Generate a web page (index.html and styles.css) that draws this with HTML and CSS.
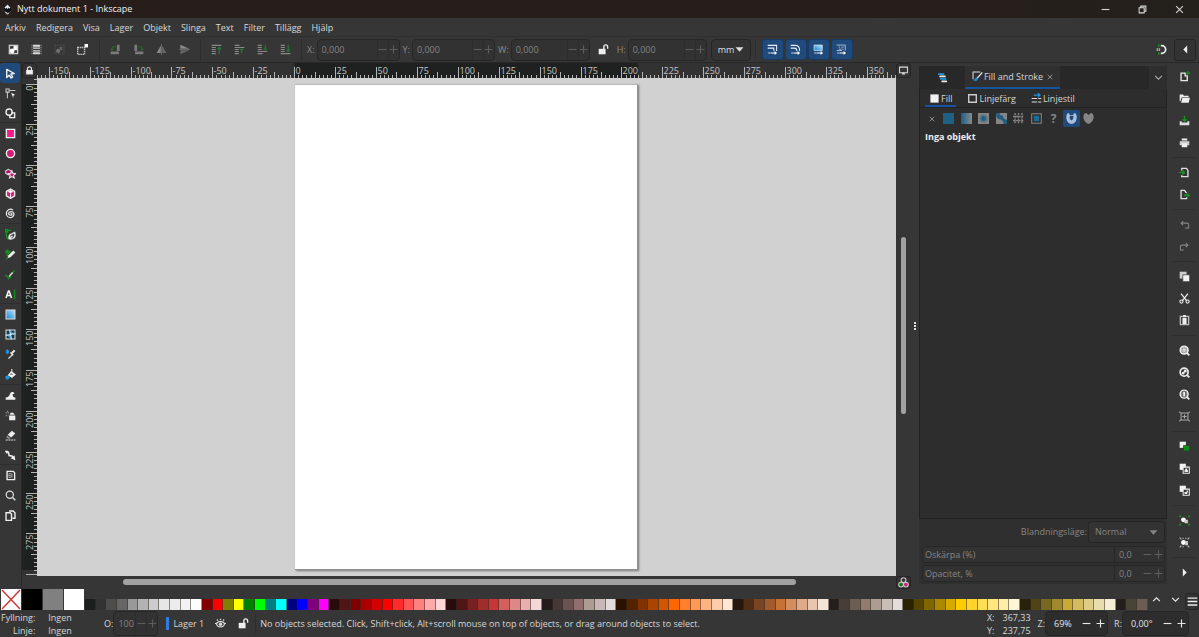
FILE: index.html
```html
<!DOCTYPE html>
<html lang="sv">
<head>
<meta charset="utf-8">
<title>Nytt dokument 1 - Inkscape</title>
<link rel="stylesheet" href="styles.css">
</head>
<body>
<svg class="sprite" aria-hidden="true">
  <linearGradient id="blueFade" x1="0" y1="1" x2="1" y2="0"><stop offset="0" stop-color="#0d86d6"/><stop offset="1" stop-color="#bfe3f8"/></linearGradient>
  <linearGradient id="greyFade"><stop offset="0" stop-color="#1d5f86"/><stop offset="1" stop-color="#8a8a8a"/></linearGradient>
  <radialGradient id="greyRadial"><stop offset=".25" stop-color="#1d5f86"/><stop offset="1" stop-color="#858585"/></radialGradient>
  <symbol id="logo" viewBox="0 0 16 16"><path fill="#0c0f14" stroke="#596069" stroke-width=".6" d="M8 1 15.500 8 12 11l-1 2-3 2.500L5 13l-1-2L.5 8z"/><path fill="#e4e8ee" d="M8 1 12 5 10.500 7 9 5.500 8 7.500 6.500 5.500 5 7 3.800 5z"/><path fill="#aab4c0" d="M4 11l3 .5 1 1.500 3-1-1 2-2 1.500L5 13z"/></symbol>
  <symbol id="selall" viewBox="0 0 16 16"><path fill="#ccc" d="M1 1h14v14H1z"/><path fill="#363636" d="M3 3h10v10H3z"/><circle cx="6" cy="10" r="3.500" fill="#fff"/><path fill="#fff" d="M8 3h5v6H8z"/></symbol>
  <symbol id="sellayers" viewBox="0 0 16 16"><path fill="none" stroke="#bbb" stroke-dasharray="2 1" d="M1.500 1v14M14.500 1v14"/><path fill="#ddd" d="M3 1h10v3H3zM3 5h10v2H3zM3 9h10v2H3zM3 12h10v3H3z"/></symbol>
  <symbol id="deselect" viewBox="0 0 16 16"><path fill="none" stroke="#5c5c5c" stroke-dasharray="2 1" d="M1.500 1.500h13v13h-13z"/><circle cx="6" cy="10" r="3" fill="#707070"/><path fill="#606060" d="M8 4h4v5H8z"/></symbol>
  <symbol id="touchsel" viewBox="0 0 16 16"><path fill="none" stroke="#ccc" stroke-width="2" stroke-dasharray="2 1" d="M1 5h10v10H1z"/><path fill="#fff" d="M11 0h5v5h-5z"/></symbol>
  <symbol id="rotl" viewBox="0 0 16 16"><path fill="#7a7a7a" d="M10 1h4v9h-4zM1 11h12v4H1z"/><path fill="none" stroke="#276a2d" stroke-width="1.500" d="M3 9V6l2-2h4M1 7l2 2 2-2"/></symbol>
  <symbol id="rotr" viewBox="0 0 16 16"><path fill="#7a7a7a" d="M2 1h4v9H2zM3 11h12v4H3z"/><path fill="none" stroke="#276a2d" stroke-width="1.500" d="M13 9V6l-2-2H7M15 7l-2 2-2-2"/></symbol>
  <symbol id="fliph" viewBox="0 0 16 16"><path fill="#8a8a8a" d="M7 2v11H1z"/><path fill="#666" d="M9 2v11h6z"/><path stroke="#777" d="M8 0v16"/></symbol>
  <symbol id="flipv" viewBox="0 0 16 16"><path fill="#8a8a8a" d="M2 1v6h13z"/><path fill="#666" d="M2 9v6l13-6z"/><path stroke="#777" d="M0 8h16"/></symbol>
  <symbol id="toTop" viewBox="0 0 16 16"><path stroke="#888" stroke-width="1.500" d="M1 2h14M1 5h6M1 8h6M1 11h6M1 14h6"/><path stroke="#25752c" stroke-width="2" fill="none" d="M12 15V5M9.500 7.500 12 5l2.500 2.500"/></symbol>
  <symbol id="raise" viewBox="0 0 16 16"><path stroke="#888" stroke-width="1.500" d="M1 2h7M1 5h14M1 8h6M1 11h6M1 14h6"/><path stroke="#25752c" stroke-width="2" d="M11 7v6M8.500 8h5"/></symbol>
  <symbol id="lower" viewBox="0 0 16 16"><path stroke="#888" stroke-width="1.500" d="M1 2h6M1 5h6M1 8h6M1 11h14M1 14h7"/><path stroke="#25752c" stroke-width="2" d="M12 2v7M9.500 7.500h5"/></symbol>
  <symbol id="toBottom" viewBox="0 0 16 16"><path stroke="#888" stroke-width="1.500" d="M1 2h6M1 5h6M1 8h6M1 11h6M1 14h14"/><path stroke="#25752c" stroke-width="2" fill="none" d="M12 1v10M9.500 8.500 12 11l2.500-2.500"/></symbol>
  <symbol id="unlock" viewBox="0 0 16 16"><path fill="#eee" d="M1 7h10v8H1z"/><path fill="none" stroke="#eee" stroke-width="2" d="M8.500 8V4a2.500 2.500 0 0 1 5.500 0v3"/></symbol>
  <symbol id="lock" viewBox="0 0 16 16"><path fill="#eee" d="M2 7h12v8H2z"/><path fill="none" stroke="#eee" stroke-width="2" d="M4.500 8V5a3.500 3.500 0 0 1 7 0v3"/></symbol>
  <symbol id="scaleStroke" viewBox="0 0 16 16"><path fill="none" stroke="#e6eefb" stroke-width="1.500" d="M1 2h13v8M1 6h9v4"/><path fill="none" stroke="#fff" stroke-width="1.500" d="M2 13h2m1 0h8M11 11l2.500 2-2.500 2"/></symbol>
  <symbol id="scaleCorner" viewBox="0 0 16 16"><path fill="none" stroke="#e6eefb" stroke-width="1.500" d="M1 2h7q6 0 6 8M1 6h5q4 0 4 4"/><path fill="none" stroke="#fff" stroke-width="1.500" d="M2 13h2m1 0h8M11 11l2.500 2-2.500 2"/></symbol>
  <symbol id="scaleGrad" viewBox="0 0 16 16"><path fill="url(#blueFade)" stroke="#dfe8f5" d="M1.500 1.500h12v8h-12z"/><path fill="none" stroke="#fff" stroke-width="1.500" d="M2 13h2m1 0h8M11 11l2.500 2-2.500 2"/></symbol>
  <symbol id="scalePat" viewBox="0 0 16 16"><path fill="none" stroke="#dfe8f5" d="M1 1.500h12.500v8M4 4.500h2m2 0h3M4 7.500h4m1 0h2M1 9.500h8"/><path fill="none" stroke="#fff" stroke-width="1.500" d="M2 13h2m1 0h8M11 11l2.500 2-2.500 2"/></symbol>
  <symbol id="snap" viewBox="0 0 16 16"><path fill="none" stroke="#eee" stroke-width="2.500" d="M7 2.500h1.500a5.500 5.500 0 0 1 0 11H7"/><path stroke="#14911f" stroke-width="2" d="M4 0v4M4 12v4"/><path stroke="#aaa" stroke-width="2" d="M2 6v4M5 6v4"/></symbol>
  <symbol id="arrow" viewBox="0 0 16 16"><path fill="none" stroke="#f2f2f2" stroke-width="2" stroke-linejoin="round" d="M2.500 2v12l3.500-3.500 3 4 2-1.500-2.500-4 5-1z"/></symbol>
  <symbol id="node" viewBox="0 0 16 16"><path fill="none" stroke="#ccc" stroke-width="1.500" d="M7 3.500h8M3.500 7v8M1.500 1.500h4.500v4.500h-4.500z"/><path fill="#fff" d="M9 7l6 3-3 1 0 4z"/></symbol>
  <symbol id="builder" viewBox="0 0 16 16"><circle cx="6" cy="6" r="4.500" fill="none" stroke="#eee" stroke-width="2"/><path fill="none" stroke="#eee" stroke-width="2" d="M9 7h5v7H7v-4"/></symbol>
  <symbol id="rect" viewBox="0 0 16 16"><path fill="#ff1a8c" stroke="#eee" stroke-width="2" d="M2 2h12v12H2z"/></symbol>
  <symbol id="ellipse" viewBox="0 0 16 16"><circle cx="8" cy="8" r="6" fill="#d81b78" stroke="#eee" stroke-width="2"/></symbol>
  <symbol id="star" viewBox="0 0 16 16"><path fill="#b01462" stroke="#ddd" stroke-width="1.500" d="M5 2l4 2v4l-4 2-4-2V4z"/><path fill="#d81b78" stroke="#eee" stroke-width="1.500" d="M10 4l1.500 3.500 4 .5-3 2.500 1 4L10 12.500l-3.500 2 1-4-3-2.500 4-.5z"/></symbol>
  <symbol id="box" viewBox="0 0 16 16"><path fill="#e0187c" stroke="#eee" stroke-width="2" stroke-linejoin="round" d="M8 1.500 14 5v6.500L8 15l-6-3.500V5z"/><path fill="#fff" d="M8 3l4 2.500-4 2-4-2z"/><path stroke="#eee" stroke-width="1.500" d="M8 8v6"/></symbol>
  <symbol id="spiral" viewBox="0 0 16 16"><path fill="none" stroke="#e8e8e8" stroke-width="1.800" d="M8 8a1.500 1.500 0 0 1 2 2 3.500 3.500 0 0 1-5-2 4.300 4.300 0 0 1 8 0 5.500 5.500 0 0 1-5 6A6 6 0 0 1 2 8a6 6 0 0 1 9.500-5"/></symbol>
  <symbol id="pen" viewBox="0 0 16 16"><path fill="none" stroke="#14911f" stroke-width="2" d="M1 1h3v3H1zM2 5v4q0 4 3 6M5 2h4"/><path fill="none" stroke="#e8e8e8" stroke-width="2" d="M6 14q-1-6 4-7l4-2q2 7-3 9-3 1-5 0zM6 14l5-4"/></symbol>
  <symbol id="pencil" viewBox="0 0 16 16"><path fill="none" stroke="#14911f" stroke-width="1.800" d="M0 4l5-3-3 5 6-3-5 6 2 1-3 5"/><path fill="#eee" d="M12 2l3 3-7 7-4 1 1-4z"/></symbol>
  <symbol id="callig" viewBox="0 0 16 16"><path fill="none" stroke="#14911f" stroke-width="2" d="M0 9l4 2 1 3 4-3"/><path fill="none" stroke="#14911f" stroke-width="2" d="M14 2l-4 5"/><path fill="none" stroke="#ddd" stroke-width="2" d="M11 5 6 11"/></symbol>
  <symbol id="texttool" viewBox="0 0 16 16"><path fill="none" stroke="#f2f2f2" stroke-width="2.300" d="M1.500 13 5 3h1l3.500 10M3 9.500h5"/><path stroke="#14911f" stroke-width="1.800" d="M14 1v14"/></symbol>
  <symbol id="gradient" viewBox="0 0 16 16"><path fill="url(#blueFade)" stroke="#ddd" stroke-width="1.500" d="M1.500 1.500h13v13h-13z"/></symbol>
  <symbol id="mesh" viewBox="0 0 16 16"><path fill="#123d59" stroke="#ddd" stroke-width="1.500" d="M1.500 1.500h13v13h-13z"/><path fill="#27a0e8" d="M2 8h6v6zM8 2v6h6z"/><path fill="none" stroke="#e8f3fa" stroke-width="1.500" d="M1 9q5 0 7-1t7-1M7 1q0 4 1 7t1 7"/></symbol>
  <symbol id="dropper" viewBox="0 0 16 16"><path fill="#1b95dd" d="M3.500 0q5 5 0 7.500-5-2.500 0-7.500z"/><path fill="none" stroke="#ddd" stroke-width="2" d="M5 14l6-6"/><path stroke="#eee" stroke-width="3" d="M10 6l4-4"/><path stroke="#eee" stroke-width="2" d="M8 5l4 4"/></symbol>
  <symbol id="bucket" viewBox="0 0 16 16"><path fill="#eee" d="M9 3l7 5-6 5-6-4z"/><path fill="#333" d="M9 6l3 2H7z"/><path stroke="#eee" stroke-width="1.500" d="M10 0v6"/><circle cx="3.500" cy="12.500" r="3" fill="#1b95dd"/></symbol>
  <symbol id="tweak" viewBox="0 0 16 16"><path fill="#eee" d="M1 14V11q5-1 6-5 1-4 5-3l2 2-3 1 1 4 3 1v3z"/></symbol>
  <symbol id="spray" viewBox="0 0 16 16"><path fill="#eee" d="M6 8h9v7H6zM8 4h4l2 3H7z"/><path stroke="#999" stroke-width="2" stroke-dasharray="1.500 1.500" d="M1 4h6M1 8h4M3 2h3"/></symbol>
  <symbol id="eraser" viewBox="0 0 16 16"><path fill="#eee" d="M10 1l5 4-6 6-5-4z"/><path fill="#999" d="M3 8l5 4-2 1-4-2z"/><path stroke="#ddd" stroke-width="1.500" stroke-dasharray="3 1" d="M1 14.500h14"/></symbol>
  <symbol id="connector" viewBox="0 0 16 16"><path fill="none" stroke="#eee" stroke-width="2.200" d="M1 2l4 1 1 5 5 1 2 4"/><path fill="#eee" d="M8 12l6-4 1 7zM0 1h4v4H2z"/></symbol>
  <symbol id="measure" viewBox="0 0 16 16"><path fill="none" stroke="#eee" stroke-width="2" d="M3 2h9l2 2v10H3z"/><path stroke="#ccc" stroke-width="1.300" d="M5 5.500h4M5 8h3M5 10.500h4M10 5v6"/></symbol>
  <symbol id="zoomer" viewBox="0 0 16 16"><circle cx="7" cy="7" r="5.200" fill="none" stroke="#ddd" stroke-width="1.800"/><path stroke="#ddd" stroke-width="2" d="M11 11l4 4"/></symbol>
  <symbol id="pages" viewBox="0 0 16 16"><path fill="none" stroke="#eee" stroke-width="2" d="M1.500 4h6l2 2v9h-8zM6 1.500h6l2.500 2.500v8H11"/></symbol>
  <symbol id="monitor" viewBox="0 0 16 16"><path fill="none" stroke="#ddd" stroke-width="1.800" d="M1 2h14v10H1z"/><path fill="#ddd" d="M6 12h4l1 3H5z"/></symbol>
  <symbol id="cms" viewBox="0 0 16 16"><circle cx="8" cy="4.500" r="3.500" fill="none" stroke="#ccc" stroke-width="1.500"/><circle cx="4.500" cy="11" r="3.500" fill="#14731f" stroke="#ccc" stroke-width="1.500"/><circle cx="11.500" cy="11" r="3.500" fill="#d81b78" stroke="#ccc" stroke-width="1.500"/></symbol>
  <symbol id="objects" viewBox="0 0 16 16"><path stroke="#1b95dd" stroke-width="2.500" stroke-linecap="round" d="M2.500 3h7M5.500 10h7"/><path stroke="#eee" stroke-width="2.500" stroke-linecap="round" d="M4.500 6.500h7M7.500 13.500h6"/></symbol>
  <symbol id="fillstroke" viewBox="0 0 16 16"><path fill="none" stroke="#ddd" stroke-width="1.500" d="M12 1.500H1.500V12"/><path stroke="#eee" stroke-width="1.800" d="M15 2 7 11"/><path fill="#1b95dd" d="M6 9l3 2-2 3H2z"/></symbol>
  <symbol id="solid" viewBox="0 0 16 16"><path fill="#f2f2f2" d="M2 2h12v12H2z"/></symbol>
  <symbol id="outline" viewBox="0 0 16 16"><path fill="none" stroke="#ccc" stroke-width="2" d="M2.500 2.500h11v11h-11z"/></symbol>
  <symbol id="linestyle" viewBox="0 0 16 16"><path stroke="#ddd" stroke-width="1.500" d="M1 8h14M1 13h14" stroke-dasharray="8 1.500"/><path stroke="#1b95dd" stroke-width="2" fill="none" d="M4 3h9M10 0l3 3-3 3"/></symbol>
  <symbol id="pflat" viewBox="0 0 16 16"><path fill="#1f6185" d="M0 0h16v16H0z"/></symbol>
  <symbol id="plin" viewBox="0 0 16 16"><path fill="url(#greyFade)" d="M0 0h16v16H0z"/></symbol>
  <symbol id="prad" viewBox="0 0 16 16"><path fill="#858585" d="M0 0h16v16H0z"/><circle cx="8" cy="8" r="7" fill="url(#greyRadial)"/></symbol>
  <symbol id="pmesh" viewBox="0 0 16 16"><path fill="#858585" d="M0 0h16v16H0z"/><path fill="#1f5f82" d="M0 0h5q1 4 5 4 0 5 6 6v6h-5q0-6-6-7Q0 9 0 0z"/></symbol>
  <symbol id="ppat" viewBox="0 0 16 16"><path stroke="#858585" stroke-width="2" stroke-dasharray="3 1" d="M3 0v16M8 0v16M13 0v16M0 5h16M0 11h16"/></symbol>
  <symbol id="pswatch" viewBox="0 0 16 16"><path fill="none" stroke="#858585" stroke-width="1.500" d="M1 1h14v14H1z"/><path fill="#1f6b96" d="M4 4h8v8H4z"/></symbol>
  <symbol id="evenodd" viewBox="0 0 16 16"><path fill="#a9bfda" fill-rule="evenodd" d="M3 0q2 0 2.500 3h5Q11 0 13 0q3 2 2.500 8-1 7-7.500 8Q1.500 15 .5 8 0 2 3 0zM5.500 4q-1 5 2.500 7 3.500-2 2.500-7z"/></symbol>
  <symbol id="nonzero" viewBox="0 0 16 16"><path fill="#858585" d="M3 0q3 0 5 3 2-3 5-3 3 2 2.500 7Q14 14 8 16 2 14 .5 7 0 2 3 0z"/></symbol>
  <symbol id="new" viewBox="0 0 16 16"><path fill="none" stroke="#e8e8e8" stroke-width="2" d="M9 3H3v11h9V7H9z"/><path stroke="#14911f" stroke-width="2" d="M13 0v6M10 3h6"/></symbol>
  <symbol id="open" viewBox="0 0 16 16"><path fill="#eee" d="M1 2h5l1 2h7v2H4l-2 6H1z"/><path fill="#eee" d="M5 7h11l-2 7H3z"/></symbol>
  <symbol id="save" viewBox="0 0 16 16"><path fill="#ddd" d="M1 9h3v2h8V9h3v6H1z"/><path stroke="#14911f" stroke-width="2" fill="none" d="M8 1v8M5 6l3 3 3-3"/></symbol>
  <symbol id="print" viewBox="0 0 16 16"><path fill="#ccc" d="M1 6h14v6H1z"/><path fill="#eee" d="M4 2h8v3H4zM4 9h8v6H4z"/></symbol>
  <symbol id="import" viewBox="0 0 16 16"><path fill="none" stroke="#ddd" stroke-width="2" d="M4 5V2h7l2 3v9H4v-2"/><path fill="none" stroke="#14911f" stroke-width="2" d="M0 8h8M5 5l3 3-3 3"/></symbol>
  <symbol id="export" viewBox="0 0 16 16"><path fill="none" stroke="#ddd" stroke-width="2" d="M11 6 8 2H3v12h8v-2"/><path fill="none" stroke="#14911f" stroke-width="2" d="M7 9h8M12 6l3 3-3 3"/></symbol>
  <symbol id="undo" viewBox="0 0 16 16"><path fill="none" stroke="#858585" stroke-width="1.500" d="M6 3 3 6l3 3M3 6h9q2 0 2 2v5H9"/></symbol>
  <symbol id="redo" viewBox="0 0 16 16"><path fill="none" stroke="#858585" stroke-width="1.500" d="M10 3l3 3-3 3M13 6H4q-2 0-2 2v5h5"/></symbol>
  <symbol id="copy" viewBox="0 0 16 16"><path fill="#ccc" d="M1 1h10v10H1z"/><path fill="#f2f2f2" stroke="#363636" d="M5.500 5.500h10v10h-10z"/></symbol>
  <symbol id="cut" viewBox="0 0 16 16"><path stroke="#eee" stroke-width="1.800" d="M3 1l8 10M13 1 5 11"/><circle cx="3.500" cy="12.500" r="2.300" fill="none" stroke="#eee" stroke-width="1.600"/><circle cx="12.500" cy="12.500" r="2.300" fill="none" stroke="#eee" stroke-width="1.600"/></symbol>
  <symbol id="paste" viewBox="0 0 16 16"><path fill="none" stroke="#bbb" stroke-width="2" d="M2 2h12v12H2z"/><path fill="#eee" d="M5 4h6v9H5zM6 0h4v3H6z"/></symbol>
  <symbol id="zsel" viewBox="0 0 16 16"><circle cx="7.500" cy="7.500" r="5.800" fill="#d8d8d8" stroke="#eee" stroke-width="2"/><path fill="none" stroke="#777" d="M4.500 4.500h6v6h-6z"/><path stroke="#eee" stroke-width="2.500" d="M11 11l4 4"/></symbol>
  <symbol id="zdraw" viewBox="0 0 16 16"><circle cx="7.500" cy="7.500" r="5.800" fill="#333" stroke="#eee" stroke-width="2.500"/><circle cx="6" cy="9" r="2" fill="#eee"/><path fill="#eee" d="M7 4h4v4H7z"/><path stroke="#eee" stroke-width="2.500" d="M11 11l4 4"/></symbol>
  <symbol id="zpage" viewBox="0 0 16 16"><circle cx="7.500" cy="7.500" r="5.800" fill="#888" stroke="#eee" stroke-width="2"/><path fill="#eee" stroke="#444" d="M5.500 3.500h4v8h-4z"/><path stroke="#eee" stroke-width="2.500" d="M11 11l4 4"/></symbol>
  <symbol id="zcenter" viewBox="0 0 16 16"><path fill="none" stroke="#aaa" stroke-width="1.500" d="M3 3h10v10H3zM0 1l3 2M16 1l-3 2M0 15l3-2M16 15l-3-2M8 5v6M5 8h6"/></symbol>
  <symbol id="dup" viewBox="0 0 16 16"><path fill="#f2f2f2" d="M1 1h9v9H1z"/><path fill="#0a8f14" stroke="#363636" d="M6.500 6.500h9v8h-9z"/></symbol>
  <symbol id="clone" viewBox="0 0 16 16"><path fill="#f2f2f2" d="M1 1h9v9H1z"/><path fill="#333" stroke="#eee" stroke-width="1.500" d="M6 6h9v9H6z"/><path fill="#eee" d="M8 10h5v3H8zM9 8h3v2H9z"/></symbol>
  <symbol id="unclone" viewBox="0 0 16 16"><path fill="#f2f2f2" d="M1 1h9v9H1z"/><path fill="#333" stroke="#eee" stroke-width="1.500" d="M6 6h9v9H6z"/><path fill="#eee" d="M8 10h4v3H8zM11 8h2v3h-2z"/></symbol>
  <symbol id="group" viewBox="0 0 16 16"><path stroke="#14911f" stroke-width="2.500" d="M0 2h3M13 2h3M0 14h3M13 14h3"/><circle cx="6.500" cy="7" r="3.500" fill="#fff"/><path fill="#ccc" d="M8 7h5v5H8z"/></symbol>
  <symbol id="ungroup" viewBox="0 0 16 16"><path stroke="#bbb" stroke-width="1.500" d="M1 1l2.500 2.500M15 1l-2.500 2.500M1 15l2.500-2.500M15 15l-2.500-2.500M6 1v2M10 1v2M6 13v2"/><circle cx="6.500" cy="8" r="3.500" fill="#fff"/><path fill="#ccc" d="M9 6h4v6H9z"/></symbol>
  <symbol id="triRight" viewBox="0 0 16 16"><path fill="#eee" d="M5 1l7 7-7 7z"/></symbol>
  <symbol id="triLeft" viewBox="0 0 16 16"><path fill="#eee" d="M11 1 4 8l7 7z"/></symbol>
  <symbol id="triDown" viewBox="0 0 16 16"><path fill="currentColor" d="M1 4h14l-7 8z"/></symbol>
  <symbol id="chevDown" viewBox="0 0 16 16"><path fill="none" stroke="currentColor" stroke-width="2" d="M2 5l6 6 6-6"/></symbol>
  <symbol id="chevUp" viewBox="0 0 16 16"><path fill="none" stroke="currentColor" stroke-width="2" d="M2 11l6-6 6 6"/></symbol>
  <symbol id="cross" viewBox="0 0 16 16"><path fill="none" stroke="currentColor" stroke-width="2" d="M2 2l12 12M14 2 2 14"/></symbol>
  <symbol id="minus" viewBox="0 0 16 16"><path stroke="currentColor" stroke-width="2" d="M1 8h14"/></symbol>
  <symbol id="plus" viewBox="0 0 16 16"><path stroke="currentColor" stroke-width="2" d="M1 8h14M8 1v14"/></symbol>
  <symbol id="restore" viewBox="0 0 16 16"><path fill="none" stroke="#ddd" stroke-width="1.800" d="M2 5h9v9H2zM5 4V2h9v9h-2"/></symbol>
  <symbol id="burger" viewBox="0 0 16 16"><path stroke="#eee" stroke-width="2" d="M1 3h14M1 8h14M1 13h14"/></symbol>
  <symbol id="eye" viewBox="0 0 16 16"><path fill="none" stroke="#ddd" stroke-width="1.800" d="M2 8q6-6 12 0-1 5-6 5T2 8M4 4 3 2M8 3V1M12 4l1-2M0 8h3M13 8h3"/><circle cx="8" cy="9" r="2.500" fill="#ddd"/></symbol>
  <symbol id="none" viewBox="0 0 20 21"><path fill="#fff" d="M0 0h20v21H0z"/><path stroke="#d03a3a" stroke-width="1.500" d="M1 1l18 19M19 1 1 20"/></symbol>
</svg>

<header class="titlebar">
  <svg class="ic"><use href="#logo"/></svg>
  <h1>Nytt dokument 1 - Inkscape</h1>
  <button aria-label="Minimera"><svg class="ic tiny"><use href="#minus"/></svg></button>
  <button aria-label="Återställ"><svg class="ic tiny"><use href="#restore"/></svg></button>
  <button aria-label="Stäng"><svg class="ic tiny"><use href="#cross"/></svg></button>
</header>

<nav class="menubar">
  <button>Arkiv</button><button>Redigera</button><button>Visa</button><button>Lager</button><button>Objekt</button><button>Slinga</button><button>Text</button><button>Filter</button><button>Tillägg</button><button>Hjälp</button>
</nav>

<div class="toolbar">
  <div class="tgroup">
    <button aria-label="Markera allt"><svg class="ic"><use href="#selall"/></svg></button>
    <button aria-label="Markera i alla lager"><svg class="ic"><use href="#sellayers"/></svg></button>
    <button aria-label="Avmarkera"><svg class="ic"><use href="#deselect"/></svg></button>
    <button aria-label="Markeringsruta"><svg class="ic"><use href="#touchsel"/></svg></button>
  </div>
  <div class="tgroup">
    <button aria-label="Rotera vänster"><svg class="ic"><use href="#rotl"/></svg></button>
    <button aria-label="Rotera höger"><svg class="ic"><use href="#rotr"/></svg></button>
    <button aria-label="Vänd vågrätt"><svg class="ic"><use href="#fliph"/></svg></button>
    <button aria-label="Vänd lodrätt"><svg class="ic"><use href="#flipv"/></svg></button>
  </div>
  <div class="tgroup">
    <button aria-label="Överst"><svg class="ic"><use href="#toTop"/></svg></button>
    <button aria-label="Höj"><svg class="ic"><use href="#raise"/></svg></button>
    <button aria-label="Sänk"><svg class="ic"><use href="#lower"/></svg></button>
    <button aria-label="Underst"><svg class="ic"><use href="#toBottom"/></svg></button>
  </div>
  <div class="fields">
    <label for="fx">X:</label>
    <div class="spin wide off"><input id="fx" value="0,000" disabled><button aria-label="Minska X"><svg class="ic tiny"><use href="#minus"/></svg></button><button aria-label="Öka X"><svg class="ic tiny"><use href="#plus"/></svg></button></div>
    <label for="fy">Y:</label>
    <div class="spin wide off"><input id="fy" value="0,000" disabled><button aria-label="Minska Y"><svg class="ic tiny"><use href="#minus"/></svg></button><button aria-label="Öka Y"><svg class="ic tiny"><use href="#plus"/></svg></button></div>
    <label for="fw">W:</label>
    <div class="spin off"><input id="fw" value="0,000" disabled><button aria-label="Minska W"><svg class="ic tiny"><use href="#minus"/></svg></button><button aria-label="Öka W"><svg class="ic tiny"><use href="#plus"/></svg></button></div>
    <button class="ratio" aria-label="Lås proportioner"><svg class="ic"><use href="#unlock"/></svg></button>
    <label for="fh">H:</label>
    <div class="spin off"><input id="fh" value="0,000" disabled><button aria-label="Minska H"><svg class="ic tiny"><use href="#minus"/></svg></button><button aria-label="Öka H"><svg class="ic tiny"><use href="#plus"/></svg></button></div>
    <div class="pick unit"><select aria-label="Enhet"><option>mm</option></select><svg class="ic tiny"><use href="#triDown"/></svg></div>
  </div>
  <div class="toggles">
    <button aria-label="Skala linjebredd"><svg class="ic"><use href="#scaleStroke"/></svg></button>
    <button aria-label="Skala hörn"><svg class="ic"><use href="#scaleCorner"/></svg></button>
    <button aria-label="Flytta toningar"><svg class="ic"><use href="#scaleGrad"/></svg></button>
    <button aria-label="Flytta mönster"><svg class="ic"><use href="#scalePat"/></svg></button>
  </div>
  <div class="snapbox">
    <button aria-label="Fäst"><svg class="ic"><use href="#snap"/></svg></button>
    <button class="framed" aria-label="Fästalternativ"><svg class="ic tiny"><use href="#triLeft"/></svg></button>
  </div>
</div>

<main class="work">
  <div class="toolbox">
    <button class="on" aria-label="Markera"><svg class="ic"><use href="#arrow"/></svg></button>
    <button aria-label="Noder"><svg class="ic"><use href="#node"/></svg></button>
    <button aria-label="Formbyggare"><svg class="ic"><use href="#builder"/></svg></button>
    <button class="ruled" aria-label="Rektangel"><svg class="ic"><use href="#rect"/></svg></button>
    <button aria-label="Ellips"><svg class="ic"><use href="#ellipse"/></svg></button>
    <button aria-label="Stjärna"><svg class="ic"><use href="#star"/></svg></button>
    <button aria-label="3D-låda"><svg class="ic"><use href="#box"/></svg></button>
    <button aria-label="Spiral"><svg class="ic"><use href="#spiral"/></svg></button>
    <hr>
    <button aria-label="Penna"><svg class="ic"><use href="#pen"/></svg></button>
    <button aria-label="Blyerts"><svg class="ic"><use href="#pencil"/></svg></button>
    <button aria-label="Kalligrafi"><svg class="ic"><use href="#callig"/></svg></button>
    <button aria-label="Text"><svg class="ic"><use href="#texttool"/></svg></button>
    <button class="ruled" aria-label="Toning"><svg class="ic"><use href="#gradient"/></svg></button>
    <button aria-label="Nät"><svg class="ic"><use href="#mesh"/></svg></button>
    <button aria-label="Pipett"><svg class="ic"><use href="#dropper"/></svg></button>
    <button aria-label="Fyll"><svg class="ic"><use href="#bucket"/></svg></button>
    <hr>
    <button aria-label="Justera"><svg class="ic"><use href="#tweak"/></svg></button>
    <button aria-label="Spreja"><svg class="ic"><use href="#spray"/></svg></button>
    <button aria-label="Sudda"><svg class="ic"><use href="#eraser"/></svg></button>
    <button aria-label="Koppling"><svg class="ic"><use href="#connector"/></svg></button>
    <button class="ruled" aria-label="Mät"><svg class="ic"><use href="#measure"/></svg></button>
    <button aria-label="Zooma"><svg class="ic"><use href="#zoomer"/></svg></button>
    <button aria-label="Sidor"><svg class="ic"><use href="#pages"/></svg></button>
  </div>

  <section class="stage">
    <button class="framed" aria-label="Lås stödlinjer"><svg class="ic tiny"><use href="#lock"/></svg></button>
    <svg class="ruler" id="rulerH"></svg>
    <button class="framed" aria-label="Skärmläge"><svg class="ic tiny"><use href="#monitor"/></svg></button>
    <svg class="ruler" id="rulerV"></svg>
    <div class="desk"><div class="sheet" id="sheet"></div></div>
    <div class="vscroll"><span></span></div>
    <div></div>
    <div class="hscroll"><span></span></div>
    <button class="framed" aria-label="Färghantering"><svg class="ic"><use href="#cms"/></svg></button>
  </section>

  <div class="grip"><i></i><i></i><i></i></div>

  <aside class="dock">
    <div class="tabs">
      <button class="tab" aria-label="Objekt"><svg class="ic"><use href="#objects"/></svg></button>
      <button class="tab active"><svg class="ic"><use href="#fillstroke"/></svg>Fill and Stroke<svg class="ic close"><use href="#cross"/></svg></button>
      <button class="more" aria-label="Fler dialoger"><svg class="ic tiny"><use href="#chevDown"/></svg></button>
    </div>
    <div class="pane">
      <div class="subtabs">
        <button class="active"><svg class="ic"><use href="#solid"/></svg>Fill</button>
        <button><svg class="ic"><use href="#outline"/></svg>Linjefärg</button>
        <button><svg class="ic"><use href="#linestyle"/></svg>Linjestil</button>
      </div>
      <div class="paints">
        <button aria-label="Ingen färg"><svg class="ic close"><use href="#cross"/></svg></button>
        <button aria-label="Enfärgad"><svg class="ic"><use href="#pflat"/></svg></button>
        <button aria-label="Linjär toning"><svg class="ic"><use href="#plin"/></svg></button>
        <button aria-label="Radiell toning"><svg class="ic"><use href="#prad"/></svg></button>
        <button aria-label="Nättoning"><svg class="ic"><use href="#pmesh"/></svg></button>
        <button aria-label="Mönster"><svg class="ic"><use href="#ppat"/></svg></button>
        <button aria-label="Färgruta"><svg class="ic"><use href="#pswatch"/></svg></button>
        <button class="ask">?</button>
        <button class="on" aria-label="Jämn-udda"><svg class="ic"><use href="#evenodd"/></svg></button>
        <button aria-label="Icke-noll"><svg class="ic"><use href="#nonzero"/></svg></button>
      </div>
      <p class="empty">Inga objekt</p>
    </div>
    <div class="props">
      <div class="blend"><label for="blend">Blandningsläge:</label><div class="pick mode"><select id="blend" disabled><option>Normal</option></select><svg class="ic tiny"><use href="#triDown"/></svg></div></div>
      <div class="prop"><label for="blur">Oskärpa (%)</label><div class="spin off"><input id="blur" value="0,0" disabled><button aria-label="Minska oskärpa"><svg class="ic tiny"><use href="#minus"/></svg></button><button aria-label="Öka oskärpa"><svg class="ic tiny"><use href="#plus"/></svg></button></div></div>
      <div class="prop"><label for="opac">Opacitet, %</label><div class="spin off"><input id="opac" value="0,0" disabled><button aria-label="Minska opacitet"><svg class="ic tiny"><use href="#minus"/></svg></button><button aria-label="Öka opacitet"><svg class="ic tiny"><use href="#plus"/></svg></button></div></div>
    </div>
  </aside>

  <div class="commands">
    <button aria-label="Ny"><svg class="ic"><use href="#new"/></svg></button>
    <button aria-label="Öppna"><svg class="ic"><use href="#open"/></svg></button>
    <button aria-label="Spara"><svg class="ic"><use href="#save"/></svg></button>
    <button aria-label="Skriv ut"><svg class="ic"><use href="#print"/></svg></button>
    <hr>
    <button aria-label="Importera"><svg class="ic"><use href="#import"/></svg></button>
    <button aria-label="Exportera"><svg class="ic"><use href="#export"/></svg></button>
    <hr>
    <button aria-label="Ångra"><svg class="ic"><use href="#undo"/></svg></button>
    <button aria-label="Gör om"><svg class="ic"><use href="#redo"/></svg></button>
    <hr>
    <button aria-label="Kopiera"><svg class="ic"><use href="#copy"/></svg></button>
    <button aria-label="Klipp ut"><svg class="ic"><use href="#cut"/></svg></button>
    <button aria-label="Klistra in"><svg class="ic"><use href="#paste"/></svg></button>
    <hr>
    <button aria-label="Zooma markering"><svg class="ic"><use href="#zsel"/></svg></button>
    <button aria-label="Zooma teckning"><svg class="ic"><use href="#zdraw"/></svg></button>
    <button aria-label="Zooma sida"><svg class="ic"><use href="#zpage"/></svg></button>
    <button aria-label="Centrera sida"><svg class="ic"><use href="#zcenter"/></svg></button>
    <hr>
    <button aria-label="Duplicera"><svg class="ic"><use href="#dup"/></svg></button>
    <button aria-label="Klona"><svg class="ic"><use href="#clone"/></svg></button>
    <button aria-label="Avlänka klon"><svg class="ic"><use href="#unclone"/></svg></button>
    <hr>
    <button aria-label="Gruppera"><svg class="ic"><use href="#group"/></svg></button>
    <button aria-label="Avgruppera"><svg class="ic"><use href="#ungroup"/></svg></button>
    <hr>
    <button aria-label="Fler kommandon"><svg class="ic tiny"><use href="#triRight"/></svg></button>
  </div>
</main>

<div class="palette">
  <div class="big"><svg><use href="#none"/></svg><i class="black"></i><i class="grey"></i><i class="white"></i></div>
  <div class="swatches" id="swatches"></div>
  <button aria-label="Rulla upp"><svg class="ic tiny"><use href="#chevUp"/></svg></button>
  <button aria-label="Rulla ned"><svg class="ic tiny"><use href="#chevDown"/></svg></button>
  <button class="framed" aria-label="Palettmeny"><svg class="ic"><use href="#burger"/></svg></button>
</div>

<footer class="status">
  <dl class="style"><dt>Fyllning:</dt><dd>Ingen</dd><dt>Linje:</dt><dd>Ingen</dd></dl>
  <label for="so">O:</label>
  <div class="spin off op"><input id="so" value="100" disabled><button aria-label="Minska"><svg class="ic tiny"><use href="#minus"/></svg></button><button aria-label="Öka"><svg class="ic tiny"><use href="#plus"/></svg></button></div>
  <button class="layer">Lager 1</button>
  <button class="sicon" aria-label="Synlighet"><svg class="ic"><use href="#eye"/></svg></button>
  <button class="sicon" aria-label="Lås lager"><svg class="ic"><use href="#unlock"/></svg></button>
  <p class="msg">No objects selected. Click, Shift+click, Alt+scroll mouse on top of objects, or drag around objects to select.</p>
  <dl class="coords"><dt>X:</dt><dd>367,33</dd><dt>Y:</dt><dd>237,75</dd></dl>
  <label for="sz">Z:</label>
  <div class="spin live zoomf"><input id="sz" value="69%"><button aria-label="Zooma ut"><svg class="ic tiny"><use href="#minus"/></svg></button><button aria-label="Zooma in"><svg class="ic tiny"><use href="#plus"/></svg></button></div>
  <label for="sr">R:</label>
  <div class="spin live rotf"><input id="sr" value="0,00°"><button aria-label="Rotera moturs"><svg class="ic tiny"><use href="#minus"/></svg></button><button aria-label="Rotera medurs"><svg class="ic tiny"><use href="#plus"/></svg></button></div>
</footer>
<script src="app.js"></script>
</body>
</html>
```
FILE: styles.css
```css
* { box-sizing: border-box; }
html { height: 100%; }
body {
  margin: 0;
  height: 100%;
  display: flex;
  flex-direction: column;
  background: #363636;
  color: #d6d6d6;
  font: 9px/12px "Open Sans", "Noto Sans", sans-serif;
  overflow: hidden;
}
button, input, select {
  font: inherit;
  color: inherit;
  background: none;
  border: 0;
  padding: 0;
  margin: 0;
  border-radius: 0;
  min-width: 0;
}
button { display: flex; align-items: center; justify-content: center; white-space: nowrap; }
hr, p, dl, dd, h1 { margin: 0; }
.sprite { position: absolute; width: 0; height: 0; }
.ic { width: 11px; height: 11px; flex: none; display: block; }
.ic.tiny { width: 9px; height: 9px; }
.ic.close { width: 6px; height: 6px; color: #aaa; }
.framed { border: 1px solid #252525; border-radius: 3px; background: #333; }

.titlebar { flex: none; height: 18px; display: flex; align-items: center; background: linear-gradient(90deg, #271e1b 70%, #24201c); padding: 0 1px 0 2px; }
.titlebar h1 { flex: 1; margin-left: 4px; font-size: 9px; font-weight: 400; color: #f0f0f0; }
.titlebar button { width: 37px; height: 18px; }

.menubar { flex: none; height: 19px; display: flex; align-items: center; gap: 10px; padding: 2px 5px 0; border-bottom: 1px solid #303030; }

.toolbar { flex: none; height: 25px; display: flex; align-items: center; }
.tgroup { display: flex; padding: 0 5px 0 2px; border-right: 1px solid #2e2e2e; margin-right: 2px; }
.tgroup button { width: 23px; height: 22px; }
.tgroup + .tgroup { padding: 0 4px 0 2px; }
.fields { display: flex; align-items: center; color: #8a8a8a; }
.fields label { margin: 0 2px 0 3px; }
.spin { display: flex; align-items: stretch; height: 22px; width: 79px; border: 1px solid #272727; border-radius: 4px; background: #323232; }
.spin.wide { width: 83px; }
.spin input { flex: 1; width: 0; padding-left: 4px; }
.spin button { width: 11px; border-left: 1px solid #2d2d2d; }
.spin.off { color: #858585; }
.spin.off button { color: #5c5c5c; }
.ratio { width: 20px; margin-left: 4px; height: 20px; }
.pick { display: flex; align-items: center; border: 1px solid #252525; border-radius: 4px; height: 22px; background: #333; position: relative; }
.pick select { appearance: none; width: 100%; height: 100%; padding-left: 6px; opacity: 1; }
.pick .ic { position: absolute; right: 6px; pointer-events: none; }
.unit { width: 40px; margin-left: 4px; color: #ddd; }
.toggles { display: flex; gap: 1px; margin-left: 4px; padding-left: 6px; border-left: 1px solid #2e2e2e; }
.toggles button { width: 22px; height: 21px; background: #204a7c; border: 1px solid #193a62; border-radius: 3px; }
.snapbox { margin-left: auto; display: flex; padding-right: 3px; }
.snapbox button { width: 22px; height: 22px; }
.snapbox button:first-child { width: 25px; }

.work { flex: 1; min-height: 0; display: flex; border-top: 1px solid #282828; }
.toolbox { width: 22px; border-right: 1px solid #282828; padding-right: 1px; flex: none; }
.toolbox button { width: 20px; height: 20px; }
.toolbox hr { border: 0; height: 1px; background: #2e2e2e; }
.toolbox .ruled { box-shadow: 0 -1px #2e2e2e; }
.toolbox .on { background: #204a7c; border-radius: 3px; }

.stage { flex: 1; min-width: 0; display: grid; grid-template: 15px minmax(0, 1fr) 13px / 15px minmax(0, 1fr) 15px; }
.ruler { width: 100%; height: 100%; display: block; overflow: hidden; background: #323232; }
.ruler .band { fill: #1e2120; }
.ruler .ticks { stroke: #b4b4b4; stroke-width: 1; fill: none; shape-rendering: crispEdges; }
.ruler text { fill: #c4c4c4; font-size: 9px; }
.desk { background: #d1d1d1; display: flex; align-items: center; justify-content: center; }
.sheet { width: 40%; aspect-ratio: 210 / 297; background: #fff; border: 1px solid #909090; border-width: 1px 1px 1px 0; border-top-color: #bbb; box-shadow: 1px 1px 2px #777; }
.vscroll { padding: 0 5px; display: flex; flex-direction: column; }
.vscroll span { margin-top: 159px; height: 177px; border-radius: 3px; background: #a2a2a2; }
.hscroll { padding: 3px 10% 4px 10%; display: flex; }
.hscroll span { flex: 1; margin-right: 2%; border-radius: 3px; background: #a2a2a2; }

.grip { width: 8px; flex: none; display: flex; flex-direction: column; align-items: center; justify-content: center; gap: 1px; }
.grip i { width: 2px; height: 2px; background: #ddd; }

.dock { width: 248px; flex: none; display: flex; flex-direction: column; padding: 3px 0 5px; }
.tabs { display: flex; height: 23px; background: #282828; }
.tab { width: 46px; }
.tab.active { width: 95px; gap: 1px; background: #303030; border-bottom: 2px solid #15539e; }
.tab .close { margin-left: 3px; }
.more { width: 18px; margin-left: auto; background: #2e2e2e; color: #aaa; }
.pane { flex: 1; background: #2d2d2d; border: 1px solid #222; border-width: 0 1px 1px; }
.subtabs { display: flex; height: 19px; padding: 1px 0 0 5px; gap: 7px; border-bottom: 1px solid #222; }
.subtabs button { gap: 1px; padding: 2px 4px 0; border-bottom: 2px solid transparent; }
.subtabs .active { border-color: #15539e; }
.paints { display: flex; padding: 2px 0 3px 3px; }
.paints button { width: 17px; height: 17px; border-radius: 2px; }
.paints button:nth-child(even) { margin-right: 1px; }
.paints .on { background: #204a7c; }
.paints .ask { font-weight: 700; font-size: 12px; color: #858585; }
.empty { font-weight: 700; color: #eee; padding: 1px 5px; }
.props { background: #2f2f2f; padding: 2px 2px 0 3px; color: #858585; }
.blend { display: flex; justify-content: flex-end; align-items: center; gap: 1px; margin-bottom: 3px; }
.mode { width: 77px; }
.prop { display: flex; align-items: stretch; height: 17px; margin-bottom: 2px; border: 1px solid #272727; border-radius: 3px; background: #323232; }
.prop label { flex: 1; padding: 2px; border-right: 1px solid #272727; }
.prop .spin { border: 0; height: auto; width: 49px; background: none; }
.prop .spin button { border: 0; }

.commands { width: 32px; flex: none; padding: 2px 0 0 2px; }
.commands button { width: 30px; height: 22px; }
.commands hr { border: 0; height: 8px; background: linear-gradient(#2e2e2e, #2e2e2e) center / 22px 1px no-repeat; }

.palette { flex: none; height: 21px; display: flex; align-items: flex-end; color: #eee; }
.big { display: flex; gap: 1px; padding: 0 1px; }
.big > * { width: 20px; height: 21px; display: block; }
.black { background: #000; }
.grey { background: #808080; }
.white { background: #fff; }
.swatches { flex: 1; display: flex; height: 11px; }
.swatches i { flex: 1; border-right: 1px solid rgba(60, 50, 40, .55); }
.palette button { width: 19px; height: 21px; }
.palette .framed { width: 14px; height: 17px; }

.status { flex: none; height: 27px; display: flex; align-items: center; padding-right: 10px; }
.status dl { display: grid; grid-template-columns: auto auto; line-height: 13px; }
.style { width: 104px; justify-content: start; column-gap: 13px; padding-left: 1px; }
.style dt { text-align: right; }
.status .spin { height: 25px; }
.status .op { width: 45px; }
.layer { margin-left: 8px; padding-left: 4px; border-left: 3px solid #2f7de0; height: 13px; }
.sicon { width: 23px; height: 20px; }
.layer + .sicon { margin-left: 5px; }
.msg { flex: 1; min-width: 0; padding-left: 4px; border-left: 1px solid #2e2e2e; white-space: nowrap; line-height: 20px; }
.coords { column-gap: 8px; margin-right: 7px; }
.status .live { background: #2d2d2d; color: #e6e6e6; }
.live input { padding-left: 8px; }
.zoomf { margin-right: 6px; }
.status .zoomf { width: 63px; }
.status .live button { width: 14px; border: 0; }
.status .rotf { width: 67px; }
```
FILE: app.js
```js
const colours = `1c1f1e 333333 4d4d4d 666666 999999 b3b3b3 cccccc e6e6e6 ececec f2f2f2 ffffff
800000 ff0000 808000 ffff00 008000 00ff00 008080 00ffff 000080 0000ff 800080 ff00ff
280b0b 501616 800000 aa0000 d40000 ff0000 ff2a2a ff5555 ff8080 ffaaaa ffd5d5
280b0b 501616 782121 a02c2c c83737 d35f5f de8787 e9afaf f4d7d7
241c1c 483737 6c5353 916f6f ac9d93 c8b7b7 e3dbdb
2b1100 552200 803300 aa4400 d45500 ff6600 ff7f2a ff9955 ffb380 ffccaa ffe6d5
28170b 502d16 784421 a05a2c c87137 d38d5f deaa87 e9c6af f4e3d7
241f1c 483e37 6c5d53 917c6f ac9d93 c8beb7 e3dedb
2b2200 554400 806600 aa8800 d4aa00 ffcc00 ffd42a ffdd55 ffe680 ffeeaa fff6d5
28220b 504416 786721 a0892c c8ab37 d3bc5f decd87 e9ddaf f4eed7
241f1c 484537 6c5d53`.split(/\s+/);
document.getElementById('swatches').innerHTML =
  colours.map(c => `<i style="background:#${c}"></i>`).join('');

const sheet = document.getElementById('sheet');

function drawRuler(id, vertical) {
  const svg = document.getElementById(id);
  const box = svg.getBoundingClientRect();
  const page = sheet.getBoundingClientRect();
  const unit = page.width / 210;
  const origin = vertical ? page.top - box.top : page.left - box.left;
  const length = vertical ? box.height : box.width;
  const extent = vertical ? page.height : page.width;
  const depth = 15;
  const labelRoom = 16;
  let ticks = '';
  let labels = '';
  const first = Math.ceil(-origin / unit / 2.5);
  for (let n = first; origin + n * 2.5 * unit < length; n++) {
    const at = Math.floor(origin + n * 2.5 * unit) + 0.5;
    const size = n % 10 === 0 ? 11 : n % 5 === 0 ? 6 : 3;
    ticks += vertical ? `M${depth - size} ${at}H${depth}` : `M${at} ${depth - size}V${depth}`;
    if (n % 10 === 0 && at + labelRoom < length) {
      labels += vertical
        ? `<text transform="translate(11 ${at + 1}) rotate(-90)" text-anchor="end">${n * 2.5}</text>`
        : `<text x="${at + 1}" y="11">${n * 2.5}</text>`;
    }
  }
  const band = vertical
    ? `<rect class="band" y="${origin}" width="15" height="${extent}"/>`
    : `<rect class="band" x="${origin}" width="${extent}" height="15"/>`;
  svg.innerHTML = `${band}<path class="ticks" d="${ticks}"/>${labels}`;
}

function drawRulers() {
  drawRuler('rulerH', false);
  drawRuler('rulerV', true);
}
drawRulers();
addEventListener('resize', drawRulers);
```
